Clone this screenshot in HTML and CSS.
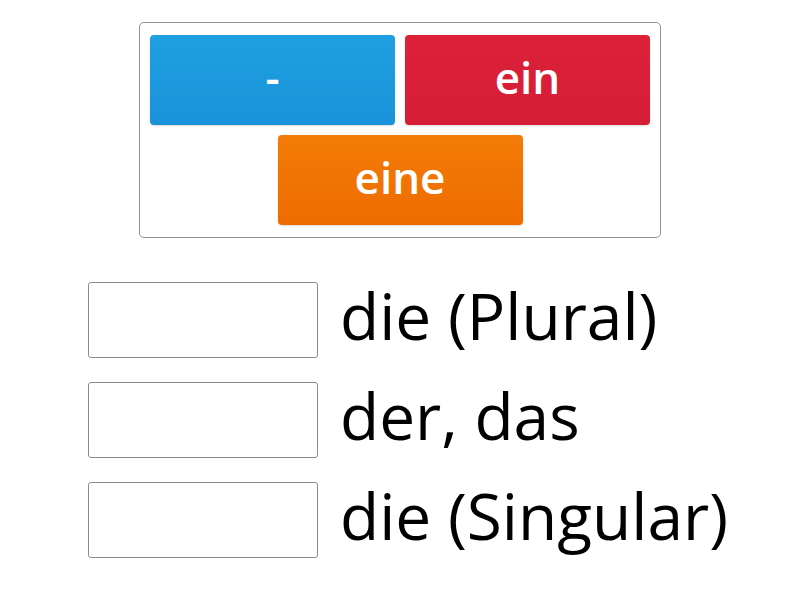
FILE: index.html
```html
<!DOCTYPE html>
<html>
<head>
<meta charset="utf-8">
<link rel="stylesheet" href="styles.css">
</head>
<body>
<div class="bank">
  <div class="tiles">
    <div class="tile blue">-</div>
    <div class="tile red">ein</div>
    <div class="tile orange">eine</div>
  </div>
</div>
<div class="rows">
  <div class="row"><div class="slot"></div><div class="label">die (Plural)</div></div>
  <div class="row"><div class="slot"></div><div class="label">der, das</div></div>
  <div class="row"><div class="slot"></div><div class="label">die (Singular)</div></div>
</div>
</body>
</html>
```
FILE: styles.css
```css
html, body { margin: 0; padding: 0; background: #fff; }
body { font-family: "Open Sans", "Liberation Sans", sans-serif; width: 800px; height: 600px; overflow: hidden; }
.bank {
  width: 522px;
  margin: 22px auto 0;
  border: 1px solid #8f8f8f;
  border-radius: 5px;
  box-sizing: border-box;
  padding: 12px 10px 12px 10px;
}
.tiles { display: flex; flex-wrap: wrap; justify-content: center; gap: 10px; }
.tile {
  width: 245px; height: 90px; border-radius: 4px;
  display: flex; align-items: center; justify-content: center;
  color: #fff; font-weight: 600; font-size: 44px; line-height: 1;
  box-shadow: 0 1px 2px rgba(0,0,0,0.15);
  padding-bottom: 7px; box-sizing: border-box;
}
.blue { background: linear-gradient(#1fa0e2, #1992d9); }
.red { background: linear-gradient(#dc2139, #d61d37); }
.orange { background: linear-gradient(#f37b07, #ee6c00); }
.rows { margin: 44px 0 0 88px; display: flex; flex-direction: column; gap: 24px; }
.row { display: flex; align-items: center; gap: 22px; height: 76px; }
.slot { width: 230px; height: 76px; box-sizing: border-box; border: 1px solid #8a8a8a; border-radius: 3px; flex: none; }
.label { font-size: 64px; color: #000; line-height: 1; padding-bottom: 9px; }
```
